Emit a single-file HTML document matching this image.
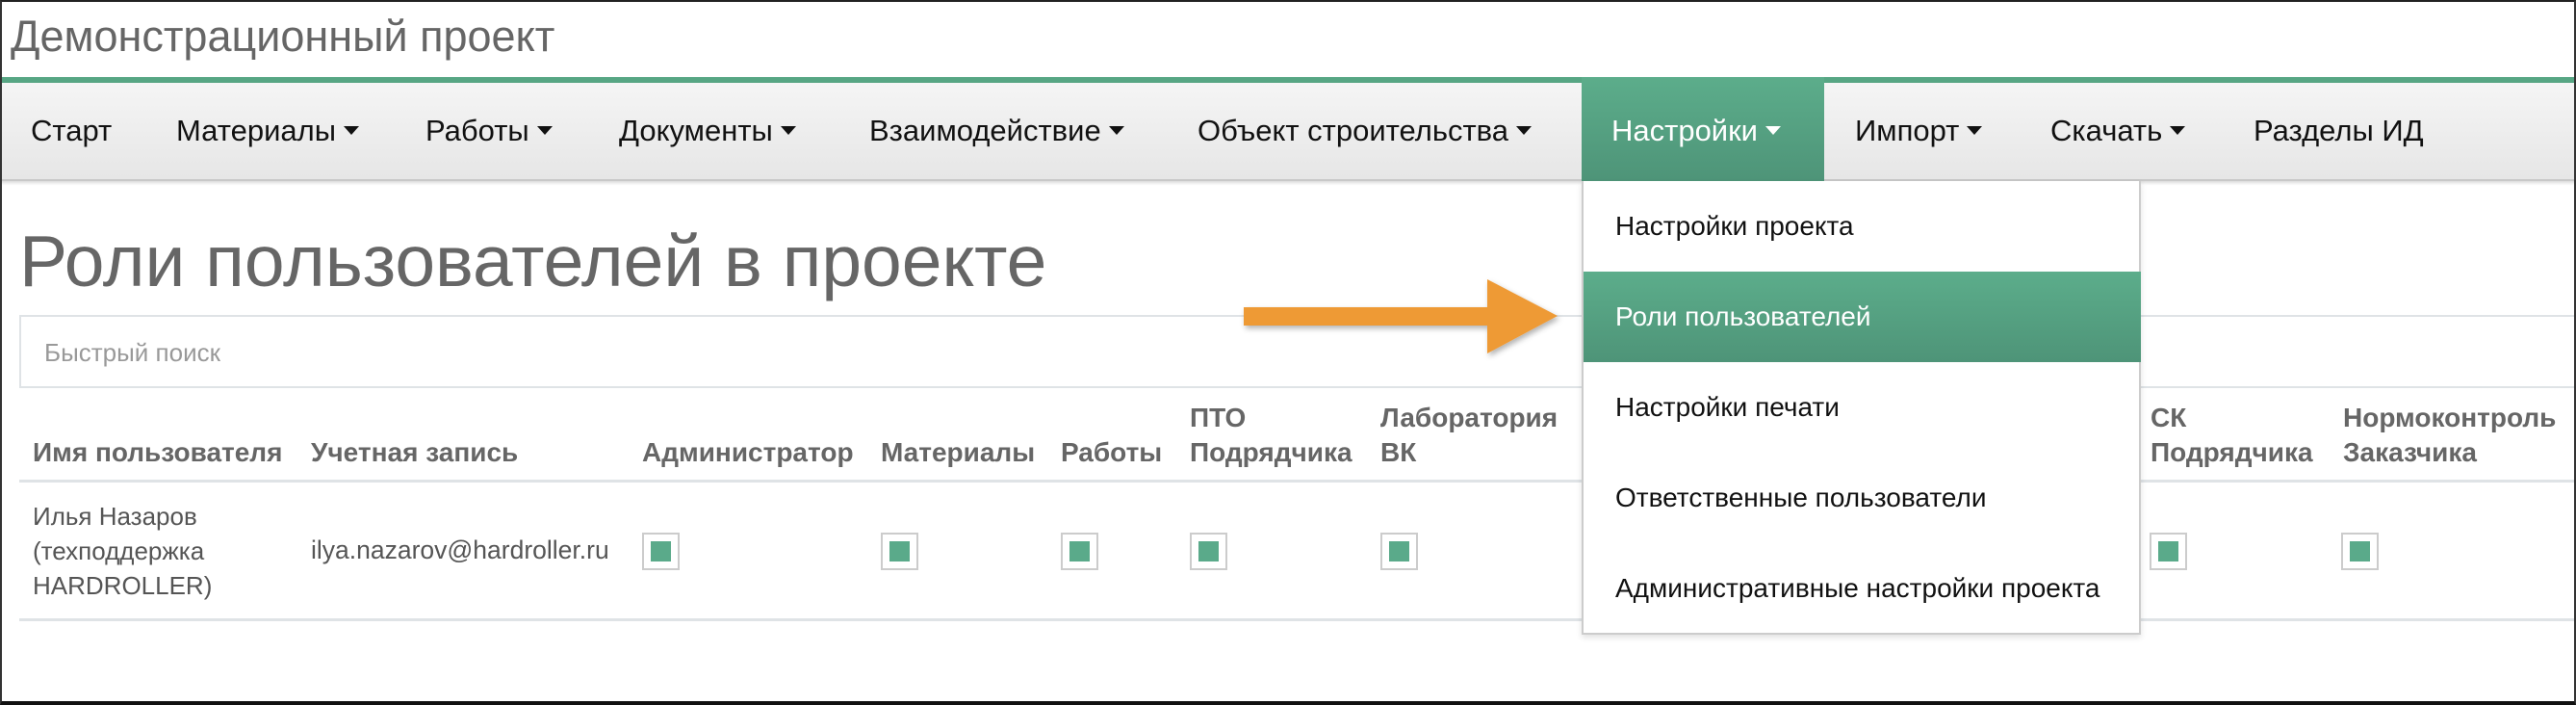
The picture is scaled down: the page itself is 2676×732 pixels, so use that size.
<!DOCTYPE html>
<html><head><meta charset="utf-8">
<style>
*{margin:0;padding:0;box-sizing:border-box}
body{width:2676px;height:732px;overflow:hidden;background:#fff;font-family:"Liberation Sans","Noto Sans CJK SC",sans-serif;position:relative}
.a{position:absolute;white-space:nowrap}
.frame{position:absolute;left:0;top:0;width:2676px;height:732px;border-top:2px solid #222;border-left:2px solid #333;border-right:2px solid #333;border-bottom:4px solid #111;z-index:20;pointer-events:none}
.green{position:absolute;left:0;top:80px;width:2676px;height:6px;background:#57a684}
.nav{position:absolute;left:0;top:86px;width:2676px;height:102px;background:linear-gradient(#f5f5f5,#e6e6e6);border-bottom:2px solid #c8c8c8;box-shadow:0 2px 3px rgba(0,0,0,.15)}
.ni{position:absolute;top:118px;font-size:31px;color:#111}
.car{display:inline-block;width:0;height:0;border-left:8px solid transparent;border-right:8px solid transparent;border-top:9px solid #111;vertical-align:middle;margin-left:8px;margin-top:-4px}
.act{position:absolute;left:1643px;top:80px;width:252px;height:108px;background:linear-gradient(#5cad8b,#4e9478)}
.th{position:absolute;font-size:28px;font-weight:bold;color:#666;line-height:36px}
.cb{position:absolute;top:553px;width:39px;height:39px;border:2px solid #ccc;background:#fff}
.cb:after{content:"";position:absolute;left:7px;top:7px;width:21px;height:21px;background:#5aaa8a}
.dd{position:absolute;left:1643px;top:188px;width:581px;height:471px;background:#fff;border:2px solid #ccc;border-top:none;box-shadow:0 3px 6px rgba(0,0,0,.12);z-index:5}
.di{position:absolute;left:33px;font-size:28px;color:#111}
</style></head><body>
<div class="a" style="left:11px;top:12px;font-size:45px;color:#666">Демонстрационный проект</div>
<div class="green"></div>
<div class="nav"></div>
<div class="act"></div>
<div class="ni" style="left:32px">Старт</div>
<div class="ni" style="left:183px">Материалы<span class="car"></span></div>
<div class="ni" style="left:442px">Работы<span class="car"></span></div>
<div class="ni" style="left:643px">Документы<span class="car"></span></div>
<div class="ni" style="left:903px">Взаимодействие<span class="car"></span></div>
<div class="ni" style="left:1244px">Объект строительства<span class="car"></span></div>
<div class="ni" style="left:1674px;color:#fff">Настройки<span class="car" style="border-top-color:#fff"></span></div>
<div class="ni" style="left:1927px">Импорт<span class="car"></span></div>
<div class="ni" style="left:2130px">Скачать<span class="car"></span></div>
<div class="ni" style="left:2341px">Разделы ИД</div>

<div class="a" style="left:20px;top:228px;font-size:75px;color:#666">Роли пользователей в проекте</div>
<div style="position:absolute;left:20px;top:327px;width:2660px;height:76px;border:2px solid #dfe3e6"></div>
<div class="a" style="left:46px;top:351px;font-size:26px;color:#999">Быстрый поиск</div>

<div class="th" style="left:34px;top:452px">Имя пользователя</div>
<div class="th" style="left:323px;top:452px">Учетная запись</div>
<div class="th" style="left:667px;top:452px">Администратор</div>
<div class="th" style="left:915px;top:452px">Материалы</div>
<div class="th" style="left:1102px;top:452px">Работы</div>
<div class="th" style="left:1236px;top:416px">ПТО<br>Подрядчика</div>
<div class="th" style="left:1434px;top:416px">Лаборатория<br>ВК</div>
<div class="th" style="left:2234px;top:416px">СК<br>Подрядчика</div>
<div class="th" style="left:2434px;top:416px">Нормоконтроль<br>Заказчика</div>
<div style="position:absolute;left:20px;top:498px;width:2660px;height:3px;background:#dfe3e6"></div>
<div class="a" style="left:34px;top:518px;font-size:26px;color:#555;line-height:36px">Илья Назаров<br>(техподдержка<br>HARDROLLER)</div>
<div class="a" style="left:323px;top:556px;font-size:26.5px;color:#555">ilya.nazarov@hardroller.ru</div>
<div class="cb" style="left:667px"></div>
<div class="cb" style="left:915px"></div>
<div class="cb" style="left:1102px"></div>
<div class="cb" style="left:1236px"></div>
<div class="cb" style="left:1434px"></div>
<div class="cb" style="left:2233px"></div>
<div class="cb" style="left:2432px"></div>
<div style="position:absolute;left:20px;top:642px;width:2660px;height:3px;background:#dfe3e6"></div>

<div class="dd">
<div class="di" style="top:31px">Настройки проекта</div>
<div style="position:absolute;left:0;top:94px;width:579px;height:94px;background:linear-gradient(#5cad8b,#4e9478)"></div>
<div class="di" style="top:125px;color:#fff">Роли пользователей</div>
<div class="di" style="top:219px">Настройки печати</div>
<div class="di" style="top:313px">Ответственные пользователи</div>
<div class="di" style="top:407px">Административные настройки проекта</div>
</div>

<svg style="position:absolute;left:1285px;top:285px;z-index:6" width="345" height="95">
<defs><filter id="s"><feDropShadow dx="2" dy="3" stdDeviation="3" flood-opacity=".3"/></filter></defs>
<polygon filter="url(#s)" fill="#ee9a36" points="7,34 260,34 260,5 333,43 260,82 260,53 7,53"/>
</svg>
<div class="frame"></div>
</body></html>
